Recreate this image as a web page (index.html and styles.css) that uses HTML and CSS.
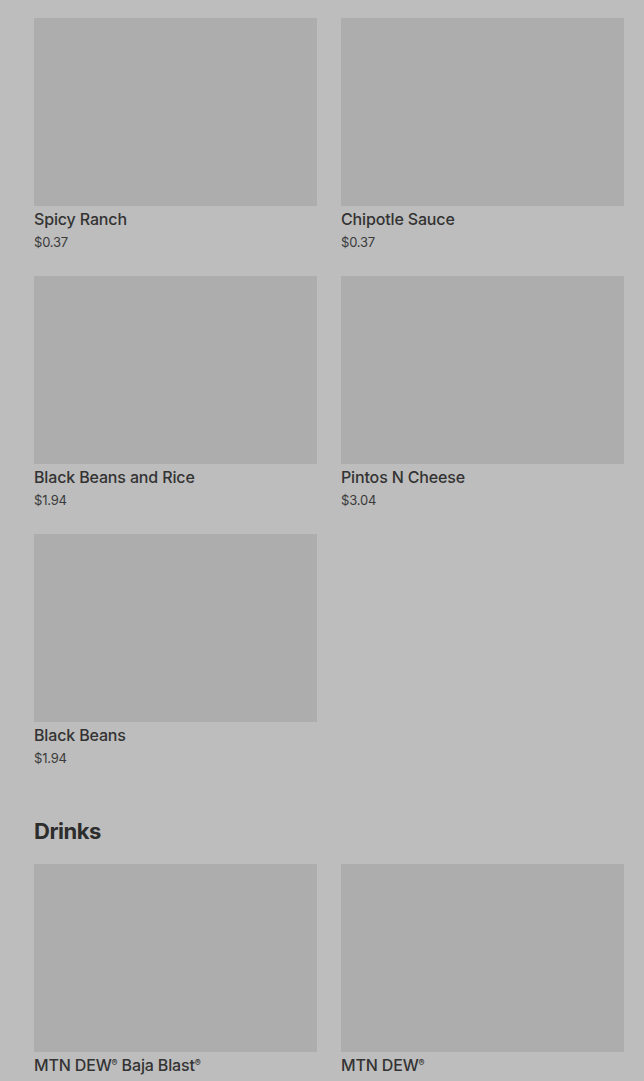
FILE: index.html
```html
<!DOCTYPE html>
<html lang="en">
<head>
  <meta charset="UTF-8">
  <meta name="viewport" content="width=device-width, initial-scale=1.0">
  <title>Menu</title>
  <link rel="stylesheet" href="styles.css">
</head>
<body>

  <!-- Соусы и гарниры -->
  <div class="menu-grid">
    <div class="item">
      <div class="item-img"></div>
      <h3>Spicy Ranch</h3>
      <p class="price">$0.37</p>
    </div>
    <div class="item">
      <div class="item-img"></div>
      <h3>Chipotle Sauce</h3>
      <p class="price">$0.37</p>
    </div>
    <div class="item">
      <div class="item-img"></div>
      <h3>Black Beans and Rice</h3>
      <p class="price">$1.94</p>
    </div>
    <div class="item">
      <div class="item-img"></div>
      <h3>Pintos N Cheese</h3>
      <p class="price">$3.04</p>
    </div>
    <div class="item">
      <div class="item-img"></div>
      <h3>Black Beans</h3>
      <p class="price">$1.94</p>
    </div>
  </div>

  <!-- Напитки -->
  <h2 class="section-title">Drinks</h2>
  <div class="menu-grid">
    <div class="item">
      <div class="item-img"></div>
      <h3>MTN DEW<sup>®</sup> Baja Blast<sup>®</sup></h3>
      <p class="price">$2.49</p>
    </div>
    <div class="item">
      <div class="item-img"></div>
      <h3>MTN DEW<sup>®</sup></h3>
      <p class="price">$2.49</p>
    </div>
  </div>

</body>
</html>
```

FILE: styles.css
```css
body {
  margin: 0;
  padding: 18px 20px 0 34px;
  background-color: #bdbdbd;
  font-family: Inter, "Noto Sans", sans-serif;
  color: #333;
  overflow: hidden;
}

.menu-grid {
  display: grid;
  grid-template-columns: 283px 283px;
  column-gap: 24px;
  row-gap: 24px;
}

.item-img {
  height: 188px;
  background-color: #adadad;
}

.item h3 {
  margin: 1px 0 0;
  font-size: 16px;
  font-weight: 500;
  line-height: 24px;
  letter-spacing: -0.15px;
}

.item h3 sup {
  font-size: 9px;
  line-height: 0;
  vertical-align: 5px;
}

.price {
  margin: 1px 0 0;
  font-size: 13px;
  line-height: 20px;
  letter-spacing: -0.2px;
  color: #3a3a3a;
}

/* Заголовок раздела */
.section-title {
  margin: 49px 0 19px;
  font-size: 22px;
  font-weight: 700;
  line-height: 28px;
  letter-spacing: -0.5px;
  color: #2d2d2d;
}
```
